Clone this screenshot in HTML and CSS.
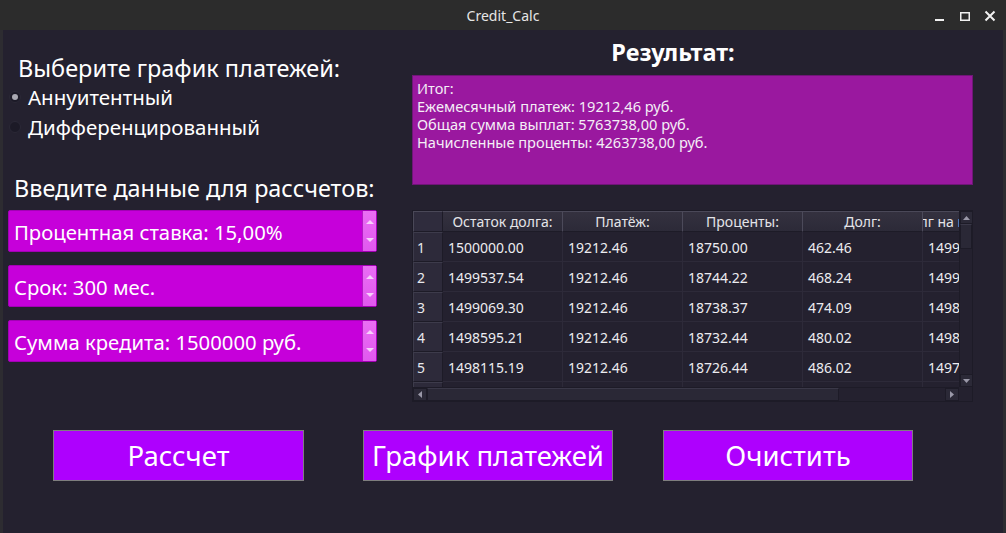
FILE: index.html
```html
<!DOCTYPE html>
<html lang="ru">
<head>
<meta charset="utf-8">
<title>Credit_Calc</title>
<link rel="stylesheet" href="styles.css">
</head>
<body>
<div class="window">
  <div class="titlebar">
    <div></div>
    <div class="title">Credit_Calc</div>
    <div class="controls">
      <svg width="12" height="12" viewBox="0 0 12 12"><rect x="1" y="9" width="9" height="2" fill="#f0f0f0"/></svg>
      <svg width="12" height="12" viewBox="0 0 12 12"><rect x="1.75" y="2.75" width="8.5" height="7.5" fill="none" stroke="#f0f0f0" stroke-width="1.5"/></svg>
      <svg width="12" height="12" viewBox="0 0 12 12"><path d="M1.5 1.5 L10.5 10.5 M10.5 1.5 L1.5 10.5" stroke="#f0f0f0" stroke-width="2"/></svg>
    </div>
  </div>
  <div class="content">
    <div class="top">
      <div class="left">
        <div class="h1">Выберите график платежей:</div>
        <div class="radio"><span class="dot checked"></span><span>Аннуитентный</span></div>
        <div class="radio"><span class="dot"></span><span>Дифференцированный</span></div>
        <div class="h2">Введите данные для рассчетов:</div>
        <div class="spins">
          <div class="spin"><div class="spin-text">Процентная ставка: 15,00%</div><div class="spin-btns"><span class="up"></span><span class="down"></span></div></div>
          <div class="spin"><div class="spin-text">Срок: 300 мес.</div><div class="spin-btns"><span class="up"></span><span class="down"></span></div></div>
          <div class="spin"><div class="spin-text">Сумма кредита: 1500000 руб.</div><div class="spin-btns"><span class="up"></span><span class="down"></span></div></div>
        </div>
      </div>
      <div class="right">
        <div class="res-title">Результат:</div>
        <div class="res-box">Итог:<br>Ежемесячный платеж: 19212,46 руб.<br>Общая сумма выплат: 5763738,00 руб.<br>Начисленные проценты: 4263738,00 руб.</div>
        <div class="table">
          <div class="viewport">
            <div class="grid">
              <div class="corner"></div>
              <div class="hh">Остаток долга:</div>
              <div class="hh">Платёж:</div>
              <div class="hh">Проценты:</div>
              <div class="hh">Долг:</div>
              <div class="hh hh-clip"><span>Долг на конец:</span></div>

              <div class="rh">1</div><div class="cell">1500000.00</div><div class="cell">19212.46</div><div class="cell">18750.00</div><div class="cell">462.46</div><div class="cell">1499537.54</div>
              <div class="rh">2</div><div class="cell">1499537.54</div><div class="cell">19212.46</div><div class="cell">18744.22</div><div class="cell">468.24</div><div class="cell">1499069.30</div>
              <div class="rh">3</div><div class="cell">1499069.30</div><div class="cell">19212.46</div><div class="cell">18738.37</div><div class="cell">474.09</div><div class="cell">1498595.21</div>
              <div class="rh">4</div><div class="cell">1498595.21</div><div class="cell">19212.46</div><div class="cell">18732.44</div><div class="cell">480.02</div><div class="cell">1498115.19</div>
              <div class="rh">5</div><div class="cell">1498115.19</div><div class="cell">19212.46</div><div class="cell">18726.44</div><div class="cell">486.02</div><div class="cell">1497629.17</div>
              <div class="rh">6</div><div class="cell">1497629.17</div><div class="cell">19212.46</div><div class="cell">18720.37</div><div class="cell">492.09</div><div class="cell">1497137.08</div>
            </div>
          </div>
          <div class="vscroll">
            <div class="sb-btn"><svg width="7" height="4" viewBox="0 0 7 4"><path d="M0 4 L3.5 0 L7 4 Z" fill="#9a98a8"/></svg></div>
            <div class="v-thumb"></div>
            <div class="sb-track"></div>
            <div class="sb-btn"><svg width="7" height="4" viewBox="0 0 7 4"><path d="M0 0 L3.5 4 L7 0 Z" fill="#9a98a8"/></svg></div>
          </div>
          <div class="hscroll">
            <div class="sb-btn"><svg width="4" height="7" viewBox="0 0 4 7"><path d="M4 0 L0 3.5 L4 7 Z" fill="#9a98a8"/></svg></div>
            <div class="h-thumb"></div>
            <div class="sb-track"></div>
            <div class="sb-btn"><svg width="4" height="7" viewBox="0 0 4 7"><path d="M0 0 L4 3.5 L0 7 Z" fill="#9a98a8"/></svg></div>
          </div>
          <div class="sc-corner"></div>
        </div>
      </div>
    </div>
    <div class="buttons">
      <div class="btn btn-first">Рассчет</div>
      <div class="btn">График платежей</div>
      <div class="btn">Очистить</div>
    </div>
  </div>
</div>
</body>
</html>
```

FILE: styles.css
```css
* { box-sizing: border-box; }
html, body { margin: 0; padding: 0; }
body {
  width: 1006px;
  height: 533px;
  overflow: hidden;
  background: #24212f;
  font-family: "Noto Sans", "DejaVu Sans", sans-serif;
  color: #ffffff;
}
.window {
  display: flex;
  flex-direction: column;
  height: 533px;
}
.titlebar {
  height: 30px;
  flex: none;
  background: #2c2c2c;
  display: grid;
  grid-template-columns: 1fr auto 1fr;
  align-items: center;
}
.title {
  font-size: 14px;
  color: #e6e6e6;
}
.controls {
  justify-self: end;
  display: flex;
  align-items: center;
  gap: 13px;
  padding-right: 10px;
  padding-top: 2px;
}
.controls svg { display: block; }
.content {
  flex: 1;
  border-left: 3px solid #2d2c31;
  border-right: 3px solid #2d2c31;
  display: flex;
  flex-direction: column;
}
.top {
  display: flex;
  align-items: flex-start;
}
.left {
  width: 374px;
  padding-left: 5px;
}
.h1 {
  margin-top: 24px;
  padding-left: 10px;
  font-size: 23.5px;
  line-height: 28px;
  white-space: nowrap;
}
.radio {
  height: 30px;
  display: flex;
  align-items: center;
  gap: 8px;
  font-size: 20.5px;
  white-space: nowrap;
}
.radio:first-of-type { margin-top: 1px; }
.dot {
  width: 12px;
  height: 12px;
  margin-left: 1px;
  border-radius: 50%;
  background: #1c1a27;
  border: 1px solid #2a2836;
  display: flex;
  align-items: center;
  justify-content: center;
  flex: none;
}
.radio .dot + span { margin-left: -1px; }
.dot.checked::after {
  content: "";
  width: 6px;
  height: 6px;
  border-radius: 50%;
  background: #a9a8b2;
}
.h2 {
  margin-top: 32px;
  padding-left: 6px;
  font-size: 23.4px;
  line-height: 28px;
  white-space: nowrap;
}
.spins {
  margin-top: 8px;
  display: flex;
  flex-direction: column;
  gap: 13px;
}
.spin {
  width: 369px;
  height: 42px;
  display: flex;
  background: #c600da;
  border: 1px solid #a300b5;
  border-radius: 2px;
}
.spin-text {
  flex: 1;
  display: flex;
  align-items: center;
  padding-left: 5px;
  padding-top: 2px;
  font-size: 20.3px;
  white-space: nowrap;
}
.spin-btns {
  width: 14px;
  background: linear-gradient(#ea6ef4, #e158ef);
  border-left: 1px solid #b21ec4;
  display: flex;
  flex-direction: column;
  justify-content: space-between;
  align-items: center;
  padding: 9px 0 9px;
}
.spin-btns span {
  width: 0;
  height: 0;
  border-left: 4px solid transparent;
  border-right: 4px solid transparent;
}
.spin-btns .up { border-bottom: 4px solid #f6d0fa; }
.spin-btns .down { border-top: 4px solid #f6d0fa; }

.right {
  margin-left: 35px;
  width: 561px;
}
.res-title {
  margin-top: 8px;
  padding-right: 39px;
  text-align: center;
  font-size: 23.5px;
  line-height: 28px;
  font-weight: bold;
}
.res-box {
  margin-top: 9px;
  height: 110px;
  background: #9a189f;
  border: 1px solid #6f1677;
  padding: 3px 4px;
  font-size: 14.6px;
  line-height: 18px;
  color: #f4eef6;
}
.table {
  margin-top: 25px;
  width: 561px;
  height: 192px;
  border: 1px solid #1d1b27;
  display: grid;
  grid-template-columns: 546px 13px;
  grid-template-rows: 176px 14px;
  background: #24212f;
}
.viewport {
  overflow: hidden;
}
.grid {
  display: grid;
  grid-template-columns: 30px repeat(5, 120px);
  grid-template-rows: 21px repeat(6, 30px);
  width: 630px;
  font-size: 14px;
}
.corner {
  background: #2f2c3d;
  border-right: 1px solid #1d1b27;
  border-bottom: 1px solid #1d1b27;
  border-top: 1px solid #4a4858;
  border-left: 1px solid #4a4858;
}
.hh {
  background: linear-gradient(#34313f, #2c2a38);
  border-top: 1px solid #4a4858;
  border-right: 1px solid #4c4a5a;
  border-bottom: 1px solid #1d1b27;
  color: #e4e4e8;
  text-align: center;
  line-height: 19px;
  white-space: nowrap;
  overflow: hidden;
}
.hh-clip {
  text-align: left;
}
.hh-clip span {
  display: inline-block;
  margin-left: -22px;
}
.rh {
  background: #2d2a3a;
  border-top: 1px solid #3d3b4b;
  border-left: 1px solid #3d3b4b;
  border-right: 1px solid #1d1b27;
  border-bottom: 1px solid #1d1b27;
  padding-left: 3px;
  line-height: 30px;
  color: #e8e8ec;
}
.cell {
  border-right: 1px solid #2d2a39;
  border-bottom: 1px solid #2d2a39;
  padding-left: 5px;
  line-height: 31px;
  color: #ececf0;
  white-space: nowrap;
}
.vscroll {
  display: flex;
  flex-direction: column;
  background: #24212f;
  border-left: 1px solid #1d1b27;
}
.hscroll {
  display: flex;
  background: #24212f;
  border-top: 1px solid #1d1b27;
}
.sb-btn {
  flex: none;
  width: 13px;
  height: 13px;
  background: #2b2937;
  border: 1px solid #1d1b27;
  display: flex;
  align-items: center;
  justify-content: center;
}
.hscroll .sb-btn { width: 14px; height: 13px; }
.v-thumb {
  height: 25px;
  flex: none;
  background: #2a2836;
  border: 1px solid #1d1b27;
  border-top-color: #3a3848;
}
.h-thumb {
  width: 412px;
  flex: none;
  background: #2a2836;
  border: 1px solid #1d1b27;
  border-top-color: #3a3848;
}
.sb-track { flex: 1; }
.sc-corner { background: #24212f; }

.buttons {
  margin-top: 28px;
  padding-left: 50px;
  display: flex;
  gap: 50px;
}
.btn {
  width: 250px;
  height: 51px;
  background: #ae00fe;
  border: 1px solid #7e7e7e;
  display: flex;
  align-items: center;
  justify-content: center;
  font-size: 27.5px;
  color: #ffffff;
  white-space: nowrap;
}
.btn-first {
  width: 251px;
  margin-right: 9px;
}
```
